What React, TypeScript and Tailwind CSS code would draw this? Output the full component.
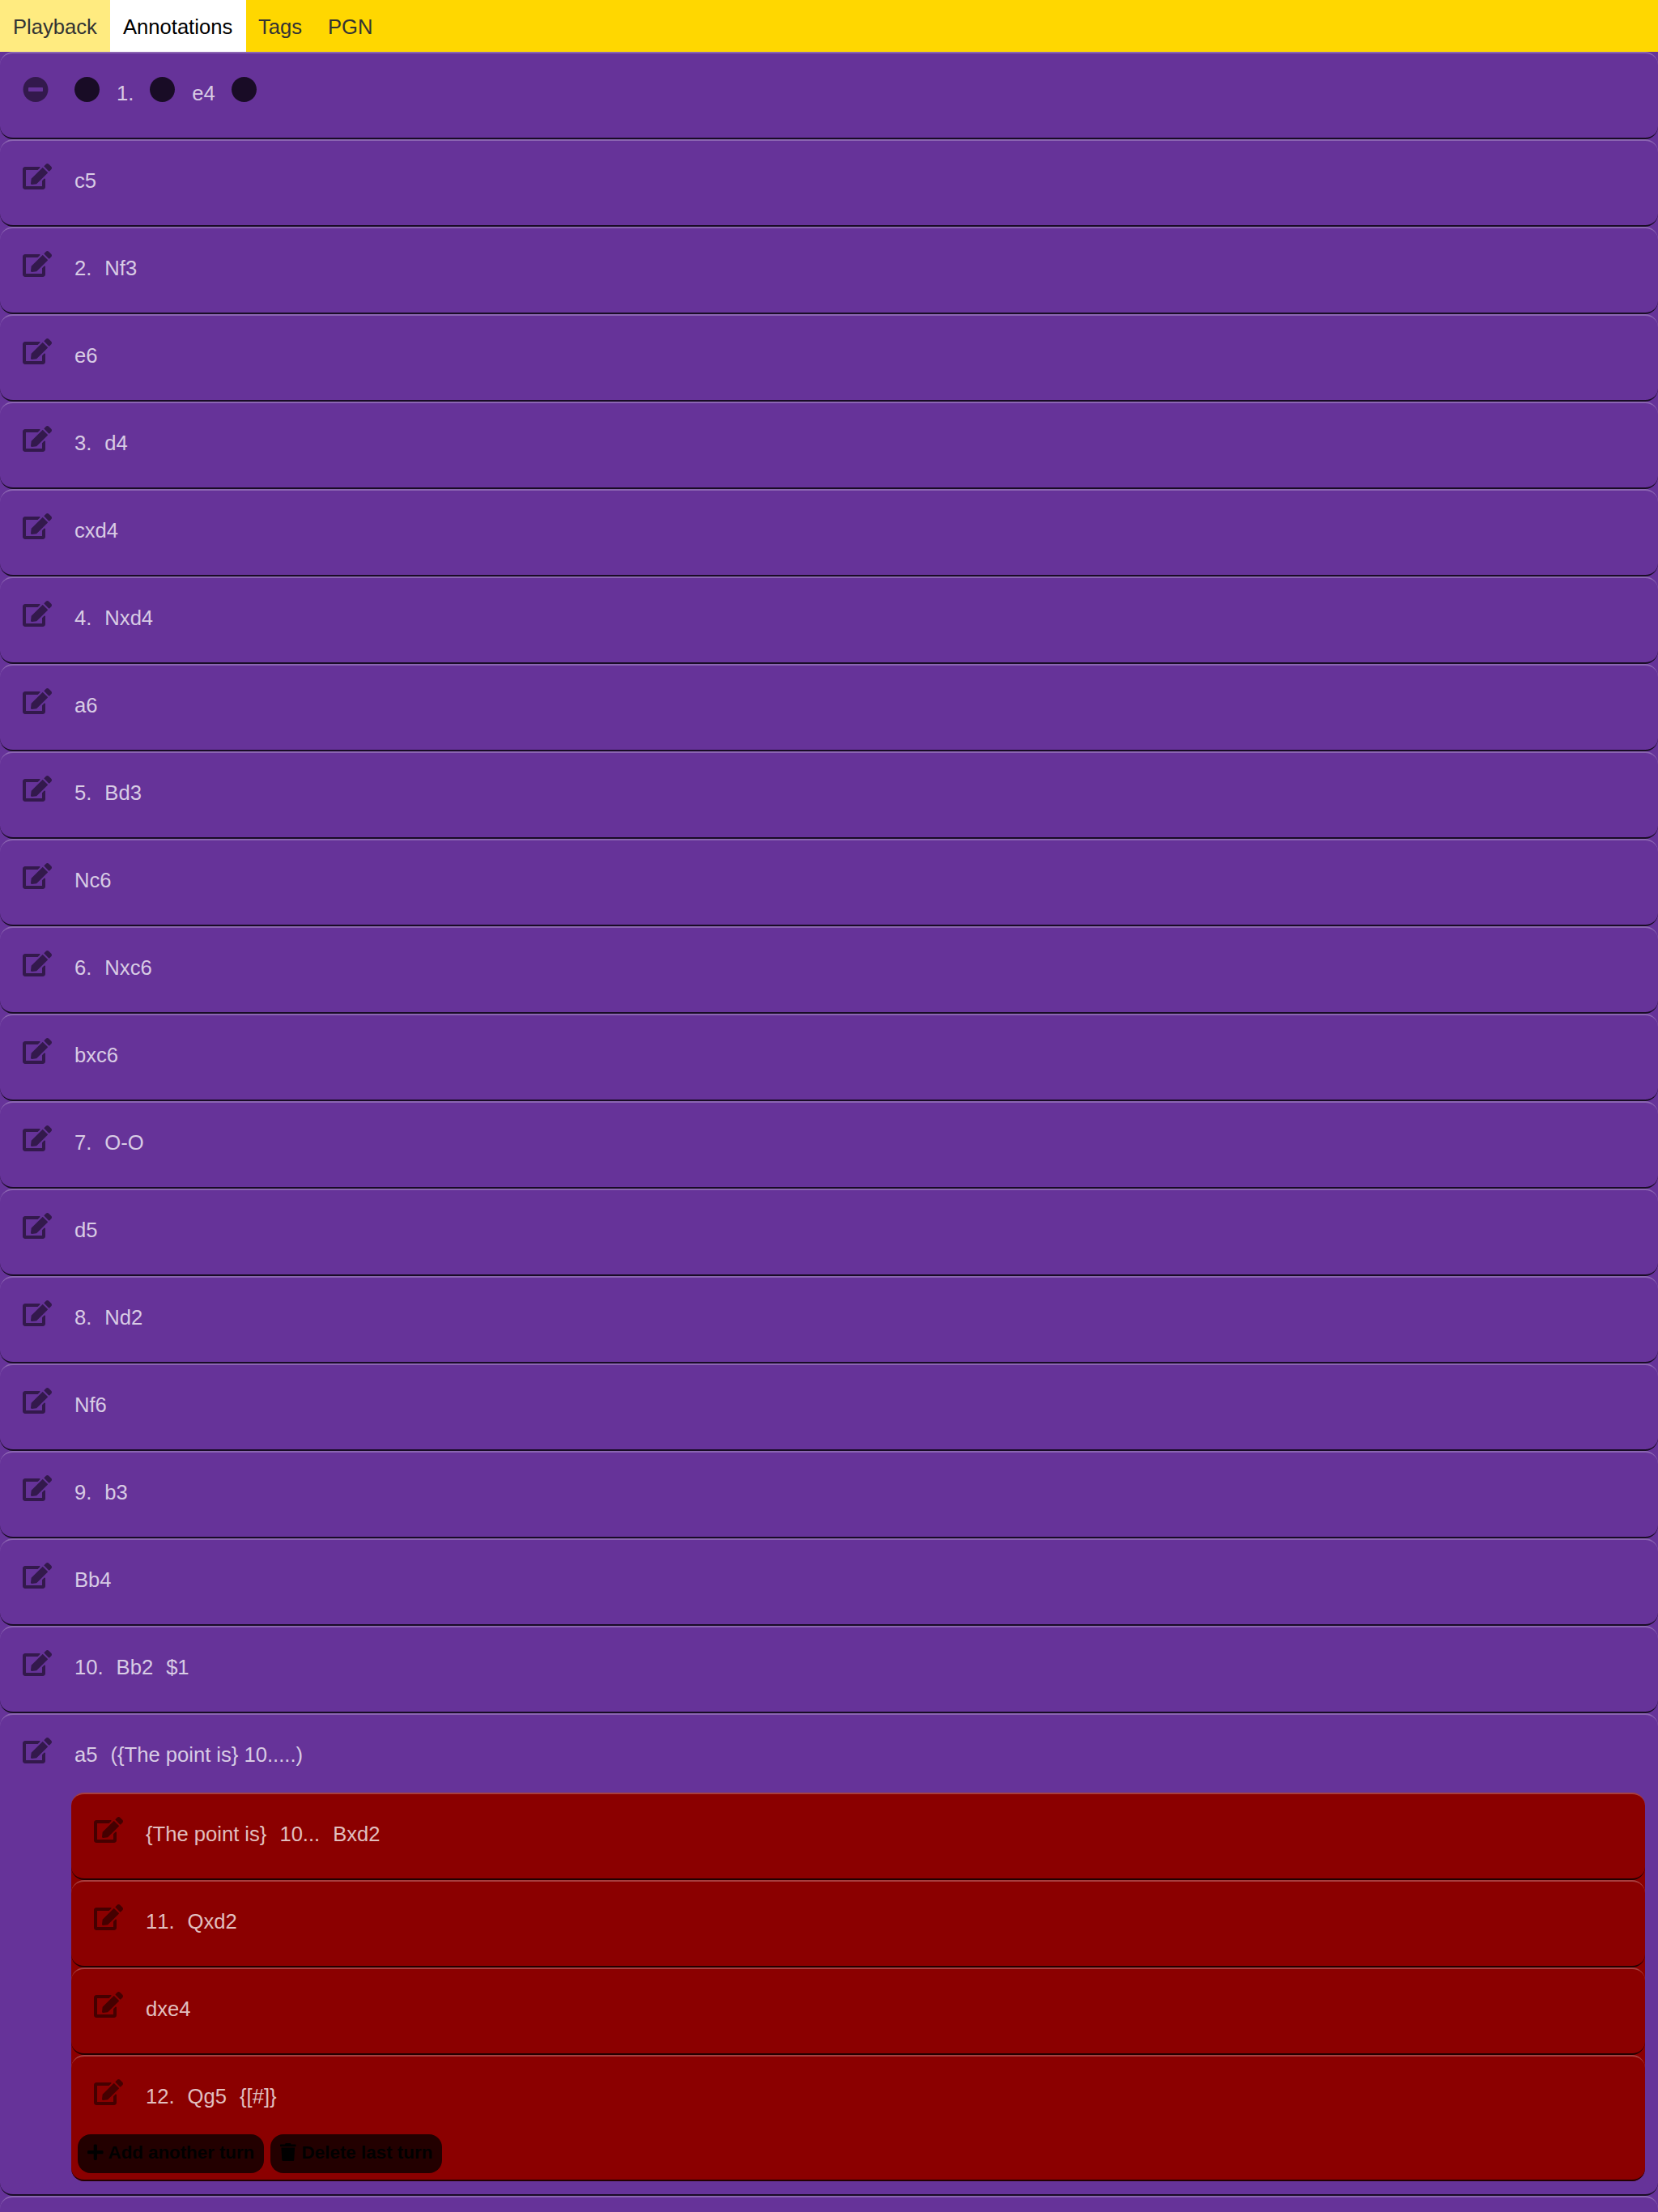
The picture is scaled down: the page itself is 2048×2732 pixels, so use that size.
import type { ReactNode } from "react";
import { FaCircle, FaEdit, FaMinusCircle, FaPlus, FaTrash } from "react-icons/fa";

const DOT = "•";

const openingMoves: string[][] = [
  ["c5"],
  ["2.", "Nf3"],
  ["e6"],
  ["3.", "d4"],
  ["cxd4"],
  ["4.", "Nxd4"],
  ["a6"],
  ["5.", "Bd3"],
  ["Nc6"],
  ["6.", "Nxc6"],
  ["bxc6"],
  ["7.", "O-O"],
  ["d5"],
  ["8.", "Nd2"],
  ["Nf6"],
  ["9.", "b3"],
  ["Bb4"],
  ["10.", "Bb2", "$1"],
];

const variation: string[][] = [
  ["{The point is}", "10...", "Bxd2"],
  ["11.", "Qxd2"],
  ["dxe4"],
  ["12.", "Qg5", "{[#]}"],
];

function Tab({ label, className }: { label: string; className: string }) {
  return (
    <button className={`h-16 pt-px pr-4 text-left leading-[30px] whitespace-nowrap ${className}`}>{label}</button>
  );
}

function Move({
  tokens,
  open = false,
  className = "",
  children,
}: {
  tokens: string[];
  open?: boolean;
  className?: string;
  children?: ReactNode;
}) {
  return (
    <li
      className={`min-h-[108px] rounded-2xl border-t-2 border-b-2 border-t-white/25 border-b-black/75 ${className}`}
    >
      {tokens.length > 0 && (
        <div className="flex h-[96px] items-start pt-7 pl-7">
          <button className="w-16 shrink-0 text-[32px] text-black/50">
            {open ? <FaMinusCircle className="translate-y-[0.5px]" /> : <FaEdit className="h-8 w-9" />}
          </button>
          <div className="flex gap-4 text-white/75 [font-kerning:none]">
            {tokens.map((token, i) =>
              token === DOT ? (
                <FaCircle
                  key={i}
                  className={`size-8 -translate-x-[0.5px] translate-y-[0.5px] text-black/75 ${i === 0 ? "mr-1" : "mx-1"}`}
                />
              ) : (
                <span key={i} className="pt-[6px] leading-[30px] whitespace-pre">
                  {token}
                </span>
              ),
            )}
          </div>
        </div>
      )}
      {children}
    </li>
  );
}

function ActionButton({ icon, label, className }: { icon: ReactNode; label: string; className: string }) {
  return (
    <button
      className={`flex h-12 items-center rounded-2xl bg-black/75 pb-1 pl-3 text-[22.4px] font-bold whitespace-nowrap text-black ${className}`}
    >
      {icon}
      <span className="mt-0.5 leading-[26px]">{label}</span>
    </button>
  );
}

export default function App() {
  return (
    <div className="h-[2732px] overflow-hidden bg-[#663399] font-['Liberation_Sans',Arial,sans-serif] text-[25.6px]">
      <nav className="flex h-16 bg-[#ffd700]">
        <Tab label="Playback" className="w-[136px] bg-white/50 pl-4 text-[#333333]" />
        <Tab label="Annotations" className="w-[168px] bg-white pl-4 text-black" />
        <Tab label="Tags" className="w-[85px] pl-[15px] text-[#333333]" />
        <Tab label="PGN" className="pl-4 text-[#333333]" />
      </nav>
      <ol>
        <Move tokens={[DOT, "1.", DOT, "e4", DOT]} open />
        {openingMoves.map((tokens, i) => (
          <Move key={i} tokens={tokens} />
        ))}
        <Move tokens={["a5", "({The point is} 10.....)"]} className="pb-4">
          <ol className="mr-4 ml-[88px] rounded-2xl bg-[#8b0000]">
            {variation.map((tokens, i) => (
              <Move key={i} tokens={tokens}>
                {i === variation.length - 1 && (
                  <div className="flex gap-2 pb-2 pl-2">
                    <ActionButton
                      icon={<FaPlus className="mr-1.5 w-[19.6px]" />}
                      label="Add another turn"
                      className="w-[230px] tracking-[-0.06px]"
                    />
                    <ActionButton
                      icon={<FaTrash className="mr-[7px] w-[19.6px]" />}
                      label="Delete last turn"
                      className="w-[212px]"
                    />
                  </div>
                )}
              </Move>
            ))}
          </ol>
        </Move>
        <Move tokens={[]} />
      </ol>
    </div>
  );
}
